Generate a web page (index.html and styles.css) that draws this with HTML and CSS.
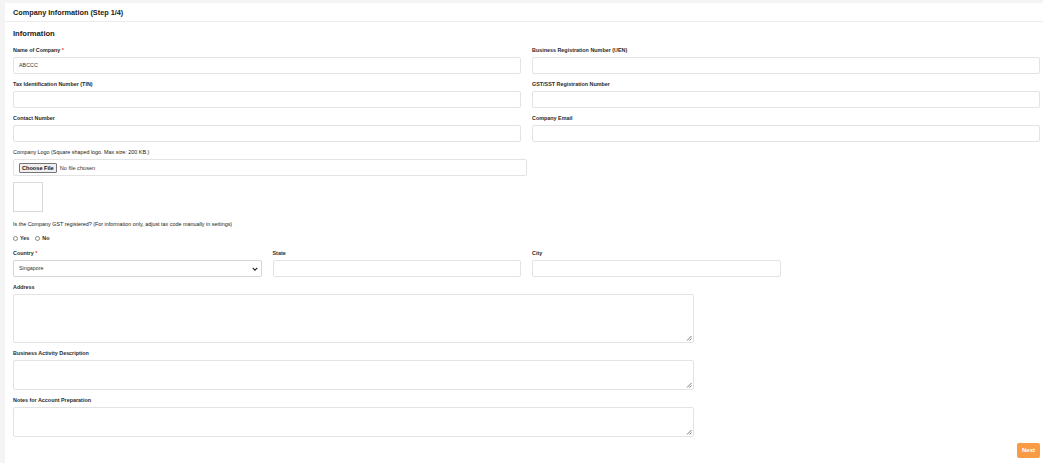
FILE: index.html
```html
<!DOCTYPE html>
<html lang="en">
<head>
<meta charset="utf-8">
<title>Company Information (Step 1/4)</title>
<link rel="stylesheet" href="styles.css">
</head>
<body>
<div class="page">
  <div class="card">
    <div class="card-header">Company Information (Step 1/4)</div>
    <div class="card-body">
      <div class="section-title">Information</div>

      <div class="grid">
        <div class="field span2">
          <div class="label">Name of Company <span class="req">*</span></div>
          <div class="input">ABCCC</div>
        </div>
        <div class="field span2">
          <div class="label">Business Registration Number (UEN)</div>
          <div class="input"></div>
        </div>
        <div class="field span2">
          <div class="label">Tax Identification Number (TIN)</div>
          <div class="input"></div>
        </div>
        <div class="field span2">
          <div class="label">GST/SST Registration Number</div>
          <div class="input"></div>
        </div>
        <div class="field span2">
          <div class="label">Contact Number</div>
          <div class="input"></div>
        </div>
        <div class="field span2">
          <div class="label">Company Email</div>
          <div class="input"></div>
        </div>
      </div>

      <div class="field">
        <div class="label light">Company Logo (Square shaped logo. Max size: 200 KB.)</div>
        <div class="file-input">
          <span class="file-btn">Choose File</span>
          <span class="file-text">No file chosen</span>
        </div>
      </div>
      <div class="logo-preview"></div>

      <div class="label light q">Is the Company GST registered? (For information only, adjust tax code manually in settings)</div>
      <div class="radios">
        <span class="radio-item"><span class="radio"></span>Yes</span>
        <span class="radio-item"><span class="radio"></span>No</span>
      </div>

      <div class="grid">
        <div class="field">
          <div class="label">Country <span class="req">*</span></div>
          <div class="input select">
            <span>Singapore</span>
            <svg class="chev" width="6" height="4" viewBox="0 0 6 4"><path d="M0.7 0.8 L3 3.1 L5.3 0.8" fill="none" stroke="#222" stroke-width="1.1"/></svg>
          </div>
        </div>
        <div class="field">
          <div class="label">State</div>
          <div class="input"></div>
        </div>
        <div class="field">
          <div class="label">City</div>
          <div class="input"></div>
        </div>
      </div>

      <div class="field wide">
        <div class="label">Address</div>
        <div class="textarea tall">
          <svg class="grip" width="6" height="6" viewBox="0 0 6 6"><path d="M5.5 1 L1 5.5 M5.5 3.5 L3.5 5.5" stroke="#555" stroke-width="0.8"/></svg>
        </div>
      </div>
      <div class="field wide">
        <div class="label">Business Activity Description</div>
        <div class="textarea">
          <svg class="grip" width="6" height="6" viewBox="0 0 6 6"><path d="M5.5 1 L1 5.5 M5.5 3.5 L3.5 5.5" stroke="#555" stroke-width="0.8"/></svg>
        </div>
      </div>
      <div class="field wide">
        <div class="label">Notes for Account Preparation</div>
        <div class="textarea">
          <svg class="grip" width="6" height="6" viewBox="0 0 6 6"><path d="M5.5 1 L1 5.5 M5.5 3.5 L3.5 5.5" stroke="#555" stroke-width="0.8"/></svg>
        </div>
      </div>

      <div class="actions">
        <span class="btn-next">Next</span>
      </div>
    </div>
  </div>
</div>
</body>
</html>
```

FILE: styles.css
```css
* { box-sizing: border-box; }
html, body {
  margin: 0;
  padding: 0;
  background: #f4f4f4;
  font-family: "Liberation Sans", Arial, sans-serif;
  color: #222;
}
.page {
  padding: 3px 0 0 5px;
  height: 463px;
  overflow: hidden;
}
.card {
  background: #fff;
  min-height: 460px;
}
.card-header {
  height: 19px;
  line-height: 19px;
  padding-left: 8px;
  font-size: 7.3px;
  font-weight: 700;
  color: #1a1a1a;
  border-bottom: 1px solid #ececec;
}
.card-body {
  padding: 0 3px 0 8px;
}
.section-title {
  margin-top: 7px;
  height: 10px;
  line-height: 10px;
  font-size: 7.6px;
  font-weight: 700;
  color: #1a1a1a;
  margin-bottom: 7px;
}
.grid {
  display: grid;
  grid-template-columns: repeat(4, 1fr);
  column-gap: 11px;
}
.span2 { grid-column: span 2; }
.field { margin-bottom: 6px; }
.label {
  height: 8px;
  line-height: 9px;
  font-size: 5.4px;
  font-weight: 700;
  color: #2a2a2a;
  margin-bottom: 3px;
  white-space: nowrap;
}
.label.light { font-weight: 400; color: #222; }
.req { color: #e53935; }
.input {
  height: 17px;
  border: 1px solid #e3e3e3;
  border-radius: 2px;
  padding-left: 5px;
  font-size: 5.4px;
  line-height: 15px;
  color: #333;
}
.select {
  display: flex;
  align-items: center;
  justify-content: space-between;
  padding-right: 3px;
  border-color: #d6d6d6;
  box-shadow: 0 0 1px rgba(0,0,0,0.08);
}
.chev { display: block; }
.file-input {
  width: 514px;
  height: 17px;
  border: 1px solid #e3e3e3;
  border-radius: 2px;
  display: flex;
  align-items: center;
  padding-left: 5px;
  gap: 3px;
  font-size: 5.6px;
}
.file-btn {
  height: 10px;
  line-height: 8px;
  padding: 0 2px;
  border: 1px solid #767676;
  border-radius: 1px;
  background: #efefef;
  font-weight: 700;
  color: #111;
}
.file-text { color: #333; }
.logo-preview {
  width: 30px;
  height: 30px;
  border: 1px solid #d9d9d9;
  margin-top: 5px;
  margin-bottom: 8px;
}
.q { margin-bottom: 6px; }
.radios {
  height: 8px;
  line-height: 8px;
  display: flex;
  gap: 6px;
  font-size: 5.4px;
  font-weight: 700;
  color: #2a2a2a;
  margin-bottom: 7px;
}
.radio-item { display: flex; align-items: center; gap: 2px; }
.radio {
  width: 5px;
  height: 5px;
  border: 0.7px solid #888;
  border-radius: 50%;
  display: inline-block;
}
.wide { width: 681px; }
.textarea {
  position: relative;
  height: 30px;
  border: 1px solid #e3e3e3;
  border-radius: 2px;
}
.textarea.tall { height: 49px; }
.grip {
  position: absolute;
  right: 1px;
  bottom: 1px;
}
.actions {
  display: flex;
  justify-content: flex-end;
  margin-top: 3px;
}
.btn-next {
  width: 23px;
  height: 15px;
  line-height: 15px;
  text-align: center;
  background: #f99a45;
  color: #fff;
  font-weight: 700;
  font-size: 6px;
  border-radius: 2px;
}
```
